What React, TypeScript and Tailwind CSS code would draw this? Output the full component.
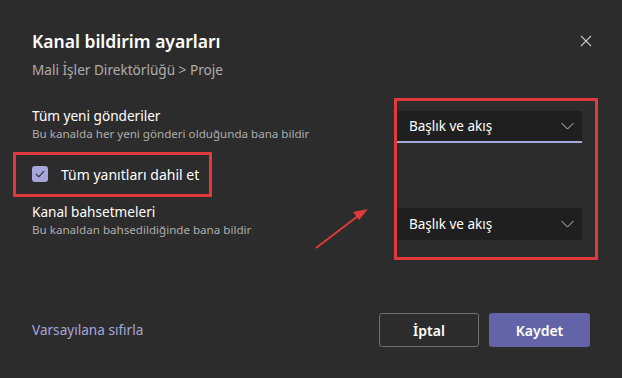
import React from "react";

function Chevron() {
  return (
    <svg width="13" height="8" viewBox="0 0 13 8" fill="none">
      <path d="M0.5 1l6 6 6-6" stroke="#c8c6c4" strokeWidth="1" />
    </svg>
  );
}

function Dropdown({ underline }: { underline?: boolean }) {
  return (
    <div
      className={
        "flex h-[32px] items-center justify-between rounded-[3px] bg-[#1f1f1f] pl-[13px] pr-[8px] " +
        (underline ? "border-b-2 border-[#a6a7dc] rounded-b-none" : "")
      }
    >
      <span className="text-[13.5px] text-[#ffffff]">Başlık ve akış</span>
      <Chevron />
    </div>
  );
}

export default function App() {
  return (
    <div
      className="relative flex h-[378px] w-[622px] flex-col bg-[#2d2c2c] px-[32px] pb-[31px] pt-[27px] text-white"
      style={{ fontFamily: '"Noto Sans", "Open Sans", sans-serif' }}
    >
      <div className="flex items-center justify-between">
        <h1 className="text-[17.5px] font-semibold leading-[28px] text-white">Kanal bildirim ayarları</h1>
        <svg width="12" height="12" viewBox="0 0 12 12" className="mr-[-2px]">
          <path d="M1 1l10 10M11 1L1 11" stroke="#c8c6c4" strokeWidth="1.1" />
        </svg>
      </div>
      <div className="mt-[5px] text-[13.6px] leading-[20px] text-[#adadad]">Mali İşler Direktörlüğü &gt; Proje</div>

      <div className="mt-[26px] flex justify-between">
        <div className="flex flex-col">
          <div className="text-[13.6px] leading-[20px] text-white">Tüm yeni gönderiler</div>
          <div className="text-[11.6px] leading-[16px] text-[#adadad]">Bu kanalda her yeni gönderi olduğunda bana bildir</div>
          <div className="mt-[20px] flex h-[24px] items-center gap-[13px]">
            <div className="flex h-[16px] w-[16px] items-center justify-center rounded-[3px] bg-[#a7a6dc]">
              <svg width="10" height="8" viewBox="0 0 10 8" fill="none">
                <path d="M1 4l2.8 2.8L9 1.2" stroke="#2d2c2c" strokeWidth="1.1" />
              </svg>
            </div>
            <span className="text-[14px] text-white">Tüm yanıtları dahil et</span>
          </div>
          <div className="mt-[16px] text-[13.6px] leading-[20px] text-white">Kanal bahsetmeleri</div>
          <div className="text-[11.6px] leading-[16px] text-[#adadad]">Bu kanaldan bahsedildiğinde bana bildir</div>
        </div>
        <div className="mr-[8px] mt-[5px] flex w-[186px] flex-col gap-[65px]">
          <Dropdown underline />
          <Dropdown />
        </div>
      </div>

      <div className="mt-auto flex items-center justify-between">
        <span className="text-[13.6px] text-[#a6a7dc]">Varsayılana sıfırla</span>
        <div className="flex gap-[10px]">
          <button className="h-[34px] w-[100px] rounded-[3px] border border-[#6e6e6e] bg-[#2d2c2c] text-[14px] font-semibold text-white">
            İptal
          </button>
          <button className="h-[34px] w-[101px] rounded-[3px] bg-[#6264a7] text-[14px] font-semibold text-white">
            Kaydet
          </button>
        </div>
      </div>

      <div className="pointer-events-none absolute left-[13px] top-[152px] h-[45px] w-[199px] border-[3px] border-[#e03a3c]" />
      <div className="pointer-events-none absolute left-[394px] top-[98px] h-[162px] w-[204px] border-[3px] border-[#e03a3c]" />
      <svg className="pointer-events-none absolute left-0 top-0" width="622" height="378">
        <line x1="316" y1="248" x2="358" y2="216" stroke="#e03a3c" strokeWidth="2" />
        <path d="M368 209l-15 3 6 8z" fill="#e03a3c" />
      </svg>
    </div>
  );
}
